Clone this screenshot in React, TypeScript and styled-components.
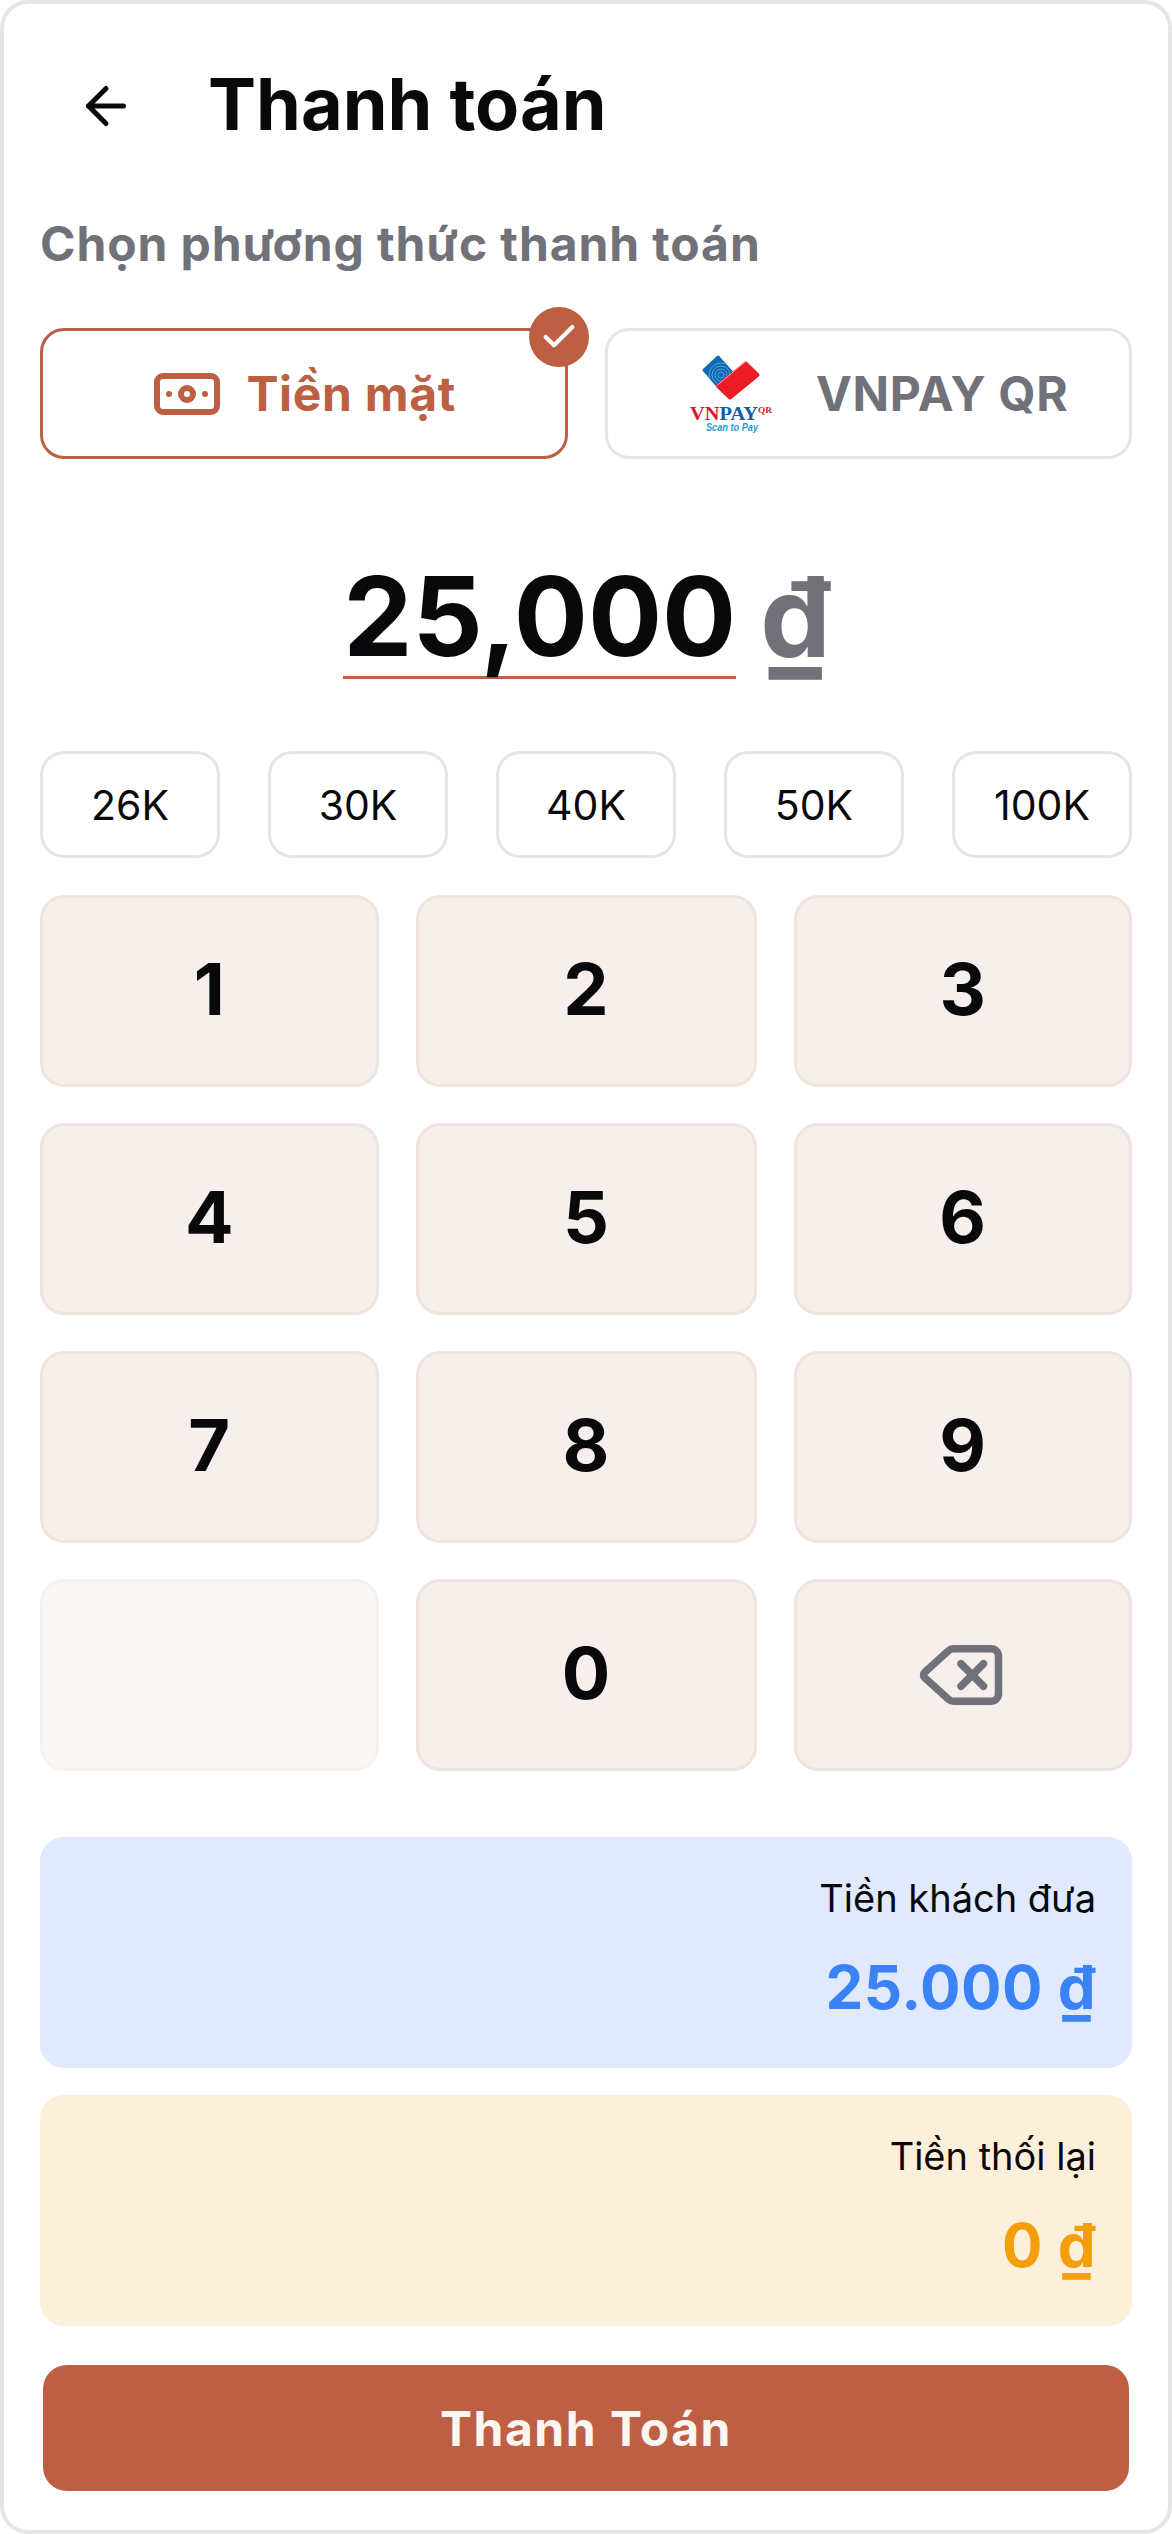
import React from 'react';
import styled, { createGlobalStyle } from 'styled-components';
import { ArrowLeft, Banknote, Check, Delete } from 'lucide-react';

const GlobalStyle = createGlobalStyle`
  html, body {
    margin: 0;
    padding: 0;
    background: #ffffff;
  }
  * {
    box-sizing: border-box;
  }
`;

const QUICK_AMOUNTS = ['26K', '30K', '40K', '50K', '100K'];
const KEYS = ['1', '2', '3', '4', '5', '6', '7', '8', '9', '', '0', 'back'];

const VnpayLogo = () => (
  <LogoSvg viewBox="0 0 128 100" aria-label="VNPAY QR">
    <defs>
      <clipPath id="blueCard">
        <polygon points="34,26 50,11 65,28 48,42" />
      </clipPath>
    </defs>
    <polygon points="36,26 50,13 63.5,28 48,40" fill="#0f68b4" stroke="#0f68b4" strokeWidth="3" strokeLinejoin="round" />
    <g clipPath="url(#blueCard)" fill="none" stroke="#5aa7dc" strokeWidth="0.9">
      <circle cx="53" cy="31" r="3" />
      <circle cx="53" cy="31" r="6" />
      <circle cx="53" cy="31" r="9" />
      <circle cx="53" cy="31" r="12" />
    </g>
    <polygon points="77.5,19.5 89.5,31 62,53.5 50,42" fill="#ed1c24" stroke="#ed1c24" strokeWidth="4" strokeLinejoin="round" />
    <path d="M49 41.5 77 18" stroke="#f8c4c6" strokeWidth="0.8" />
    <text x="22" y="76" fontFamily="'Liberation Serif', serif" fontWeight="700" fontSize="19" textLength="68" lengthAdjust="spacingAndGlyphs">
      <tspan fill="#d7182a">VN</tspan>
      <tspan fill="#0f5ea8">PAY</tspan>
    </text>
    <text x="90" y="69" fill="#d7182a" fontFamily="'Liberation Serif', serif" fontWeight="700" fontSize="8" textLength="14" lengthAdjust="spacingAndGlyphs">QR</text>
    <text x="38" y="87" fill="#1f9bd7" fontFamily="'Liberation Sans', sans-serif" fontStyle="italic" fontWeight="700" fontSize="11" textLength="52" lengthAdjust="spacingAndGlyphs">Scan to Pay</text>
  </LogoSvg>
);

const App = () => {
  return (
    <>
      <GlobalStyle />
      <Frame>
        <Header>
          <BackButton type="button" aria-label="Quay lại">
            <ArrowLeft size={60} strokeWidth={2} />
          </BackButton>
          <Title>Thanh toán</Title>
        </Header>

        <SectionLabel>Chọn phương thức thanh toán</SectionLabel>

        <Methods>
          <MethodButton type="button" $active>
            <Banknote size={72} strokeWidth={2} />
            <MethodName>Tiền mặt</MethodName>
            <CheckBadge>
              <Check size={40} strokeWidth={2.5} />
            </CheckBadge>
          </MethodButton>
          <MethodButton type="button">
            <VnpayLogo />
            <MethodName>VNPAY QR</MethodName>
          </MethodButton>
        </Methods>

        <AmountRow>
          <AmountValue>25,000</AmountValue>
          <AmountCurrency>₫</AmountCurrency>
        </AmountRow>

        <QuickRow>
          {QUICK_AMOUNTS.map((amount) => (
            <QuickButton type="button" key={amount}>
              {amount}
            </QuickButton>
          ))}
        </QuickRow>

        <Keypad>
          {KEYS.map((key, index) => (
            <Key type="button" key={index} $blank={key === ''}>
              {key === 'back' ? <BackspaceIcon size={90} strokeWidth={2} /> : <KeyDigit>{key}</KeyDigit>}
            </Key>
          ))}
        </Keypad>

        <SummaryCard $bg="#e0eafc">
          <SummaryLabel>Tiền khách đưa</SummaryLabel>
          <SummaryValue $color="#3b82f6">25.000 ₫</SummaryValue>
        </SummaryCard>
        <SummaryCard $bg="#fdf0da" $gap>
          <SummaryLabel>Tiền thối lại</SummaryLabel>
          <SummaryValue $color="#f59e0b">0 ₫</SummaryValue>
        </SummaryCard>

        <PayButton type="button">Thanh Toán</PayButton>
      </Frame>
    </>
  );
};

const Frame = styled.div`
  width: 1172px;
  height: 2534px;
  padding: 0 36px;
  border: 4px solid #e5e5e5;
  border-radius: 28px;
  background: #ffffff;
  font-family: Inter, 'Noto Sans', sans-serif;
  color: #09090b;
  overflow: hidden;
`;

const Header = styled.header`
  display: flex;
  align-items: center;
  height: 82px;
  margin-top: 59px;
  padding-left: 36px;
`;

const BackButton = styled.button`
  display: flex;
  width: 60px;
  height: 60px;
  margin-top: 4px;
  padding: 0;
  border: 0;
  background: none;
  color: #09090b;
`;

const Title = styled.h1`
  margin: 0 0 0 72px;
  font-size: 72px;
  line-height: 82px;
  font-weight: 700;
`;

const SectionLabel = styled.h2`
  margin: 70px 0 0;
  font-size: 48px;
  line-height: 58px;
  font-weight: 700;
  letter-spacing: 0.9px;
  color: #71717a;
`;

const Methods = styled.div`
  display: grid;
  grid-template-columns: 1fr 1fr;
  gap: 37px;
  margin-top: 55px;
`;

const MethodButton = styled.button<{ $active?: boolean }>`
  position: relative;
  display: flex;
  align-items: center;
  justify-content: center;
  gap: ${(props) => (props.$active ? '23px' : '20px')};
  height: 131px;
  padding: 0;
  border: 3px solid ${(props) => (props.$active ? '#bc5f42' : '#e5e5e5')};
  border-radius: 24px;
  background: #ffffff;
  font-family: inherit;
  color: ${(props) => (props.$active ? '#bc5f42' : '#71717a')};
`;

const MethodName = styled.span`
  font-size: 48px;
  line-height: 58px;
  font-weight: 700;
  letter-spacing: 0.7px;
`;

const CheckBadge = styled.span`
  position: absolute;
  top: -24px;
  right: -24px;
  display: flex;
  align-items: center;
  justify-content: center;
  width: 60px;
  height: 60px;
  border-radius: 50%;
  background: #bc5f42;
  color: #ffffff;
`;

const LogoSvg = styled.svg`
  display: block;
  width: 128px;
  height: 100px;
  flex: none;
`;

const AmountRow = styled.div`
  display: flex;
  justify-content: center;
  gap: 24px;
  height: 122px;
  margin-top: 98px;
  padding-left: 2px;
`;

const AmountValue = styled.div`
  width: 393px;
  height: 122px;
  border-bottom: 3px solid #bc5f42;
  font-size: 110px;
  line-height: 119px;
  font-weight: 700;
  text-align: center;
`;

const AmountCurrency = styled.span`
  font-size: 112px;
  line-height: 119px;
  font-weight: 700;
  color: #71717a;
`;

const QuickRow = styled.div`
  display: flex;
  justify-content: space-between;
  margin-top: 72px;
`;

const QuickButton = styled.button`
  width: 180px;
  height: 107px;
  padding: 0;
  border: 3px solid #e5e5e5;
  border-radius: 24px;
  background: #ffffff;
  font-family: inherit;
  font-size: 41px;
  font-weight: 400;
  color: #09090b;
`;

const Keypad = styled.div`
  display: grid;
  grid-template-columns: 1fr 341px 1fr;
  grid-auto-rows: 192px;
  gap: 36px 37px;
  margin-top: 37px;
`;

const Key = styled.button<{ $blank?: boolean }>`
  display: flex;
  align-items: center;
  justify-content: center;
  padding: 0;
  border: 3px solid #f1e3dd;
  border-radius: 24px;
  background: #f6efeb;
  font-family: inherit;
  font-size: 72px;
  font-weight: 700;
  color: #09090b;
  opacity: ${(props) => (props.$blank ? 0.5 : 1)};
`;

const KeyDigit = styled.span`
  margin-bottom: 5px;
`;

const BackspaceIcon = styled(Delete)`
  margin-right: 4px;
  color: #71717a;
`;

const SummaryCard = styled.section<{ $bg: string; $gap?: boolean }>`
  display: flex;
  flex-direction: column;
  align-items: flex-end;
  gap: 29px;
  height: 231px;
  margin-top: ${(props) => (props.$gap ? '27px' : '66px')};
  padding: 37px 36px 0;
  border-radius: 24px;
  background: ${(props) => props.$bg};
`;

const SummaryLabel = styled.div`
  font-size: 38px;
  line-height: 48px;
  font-weight: 400;
  color: #09090b;
`;

const SummaryValue = styled.div<{ $color: string }>`
  font-size: 60px;
  line-height: 72px;
  font-weight: 700;
  letter-spacing: 0.5px;
  color: ${(props) => props.$color};
`;

const PayButton = styled.button`
  display: block;
  width: calc(100% - 6px);
  height: 126px;
  margin: 39px 3px 0;
  padding: 0;
  border: 0;
  border-radius: 24px;
  background: #bc5f42;
  font-family: inherit;
  font-size: 48px;
  font-weight: 700;
  letter-spacing: 1.5px;
  color: #fdf5f2;
`;

export default App;
